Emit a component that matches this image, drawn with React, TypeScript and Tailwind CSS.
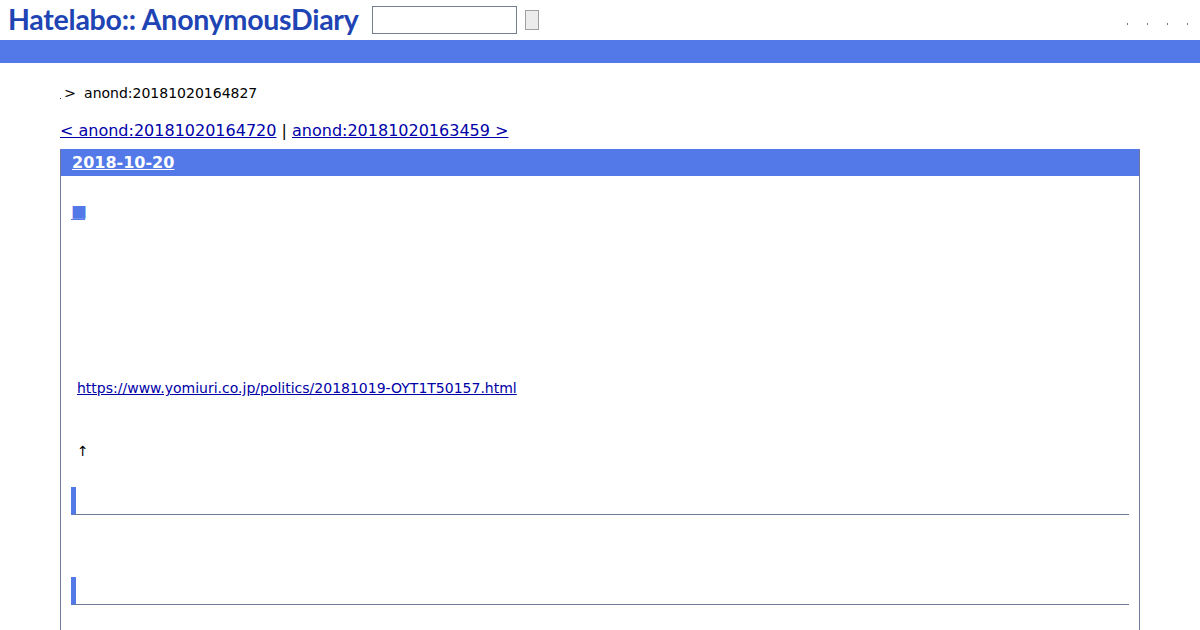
export default function App() {
  return (
    <div className="h-[630px] overflow-hidden bg-white font-['DejaVu_Sans',sans-serif] text-[14px] text-black">
      {/* ヘッダー */}
      <div className="flex h-10 items-start">
        <h1 className="ml-[8px] mt-[2px] w-[364px] font-['Lato',sans-serif] text-[28.5px] leading-[34px] font-bold tracking-[-0.25px] whitespace-nowrap text-[#2044b4]">
          Hatelabo::<span className="ml-[6px]">AnonymousDiary</span>
        </h1>
        <input className="mt-[6px] h-[28px] w-[145px] border border-[#767e92] bg-white" />
        <button className="mt-[10px] ml-[8px] h-[20px] w-[14px] border border-[#a0a0a0] bg-[#ececec]" />
        <div className="mt-[23px] mr-[12px] ml-auto flex gap-[19px]">
          <span className="h-[2px] w-[1px] bg-[#777]" />
          <span className="h-[2px] w-[1px] bg-[#777]" />
          <span className="h-[2px] w-[1px] bg-[#777]" />
          <span className="h-[2px] w-[1px] bg-[#777]" />
        </div>
      </div>
      <div className="h-[23px] bg-[#5279e7]" />

      <div className="mx-[60px]">
        {/* パンくず */}
        <div className="mt-[21px] flex h-[18px] items-center leading-[18px] whitespace-nowrap">
          <span className="relative top-[5px] h-[1px] w-[1px] bg-[#444]" />
          <span className="ml-[3px] text-[14.4px]">&gt;</span>
          <span className="ml-[8px]">anond:20181020164827</span>
        </div>

        <div className="mt-[19px] h-[19px] text-[16px] leading-[19px] whitespace-nowrap">
          <a href="#" className="text-[#0000a8] underline">&lt; anond:20181020164720</a>
          <span> | </span>
          <a href="#" className="text-[#0000a8] underline">anond:20181020163459 &gt;</a>
        </div>

        {/* 日記本体 */}
        <div className="mt-[9px] h-[500px] border-x border-[#6f7a96]">
          <h2 className="h-[27px] bg-[#5279e7] pt-[1px] pl-[11px] text-[16px] leading-[26px] font-bold text-white">
            <a href="#" className="underline">2018-10-20</a>
          </h2>
          <div className="px-[10px]">
            <div className="mt-[25px] h-[20px] leading-[20px]">
              <a href="#" className="font-['Noto_Sans_CJK_JP',sans-serif] text-[16px] tracking-[-2px] text-[#5279e7] underline">■</a>
            </div>
            <p className="mt-[158px] ml-[6px] h-[18px] leading-[18px]">
              <a href="#" className="text-[#0000a8] underline">https://www.yomiuri.co.jp/politics/20181019-OYT1T50157.html</a>
            </p>
            <p className="mt-[45px] ml-[6px] h-[18px] leading-[18px]">↑</p>
            <div className="mt-[27px] h-[28px] border-b border-l-[5px] border-[#6f7a96] border-l-[#5279e7]" />
            <div className="mt-[62px] h-[28px] border-b border-l-[5px] border-[#6f7a96] border-l-[#5279e7]" />
          </div>
        </div>
      </div>
    </div>
  );
}
